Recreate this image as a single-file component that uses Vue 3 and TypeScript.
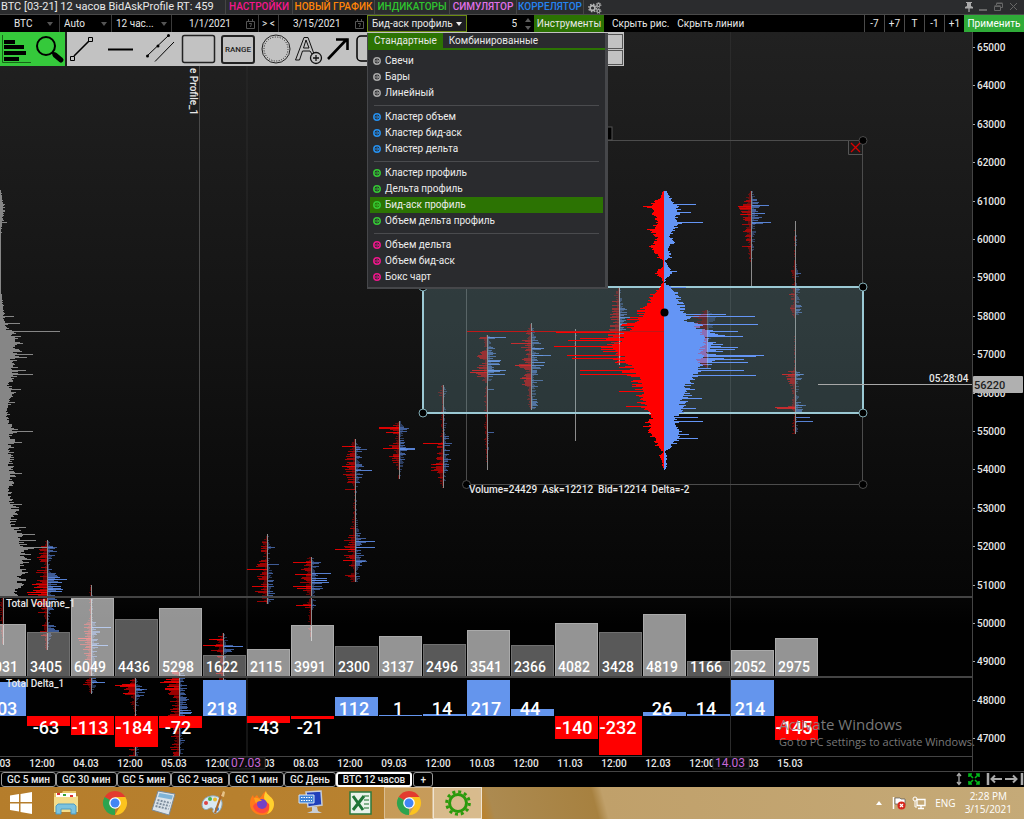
<script setup lang="ts">
import { ref } from 'vue'

type Knot = [number, number, number]
type Spike = [number, number]
interface Profile { x: number; knots: Knot[]; spikes?: Spike[] }
interface Shape { d: string; side: string; tone: number }

function makeRandom(seed: number) {
  let s = seed
  return () => {
    s = (s * 1664525 + 1013904223) % 4294967296
    return s / 4294967296
  }
}

function envelope(knots: Knot[], y: number, column: 1 | 2): number {
  for (let i = 0; i < knots.length - 1; i++) {
    const a = knots[i]
    const b = knots[i + 1]
    if (y >= a[0] && y <= b[0]) {
      return a[column] + ((b[column] - a[column]) * (y - a[0])) / (b[0] - a[0])
    }
  }
  return 0
}

function shapes(p: Profile, floor: number, solid: boolean): Shape[] {
  const rnd = makeRandom(Math.round(p.x * 97 + 11))
  const paths: Record<string, string> = {}
  const add = (y: number, w: number) => {
    const side = w < 0 ? 'bid' : 'ask'
    const size = Math.abs(w)
    const tone = solid ? 3 : size > 12 ? 3 : size > 5 ? 2 : 1
    const key = side + tone
    paths[key] = (paths[key] || '') + `M${p.x} ${y + 0.5}h${Math.round(w)}`
  }
  const first = p.knots[0][0]
  const last = p.knots[p.knots.length - 1][0]
  for (let y = first; y < last; y++) {
    const left = envelope(p.knots, y, 1) * (floor + (1 - floor) * Math.pow(rnd(), 1.6) * 1.2)
    const right = envelope(p.knots, y, 2) * (floor + (1 - floor) * Math.pow(rnd(), 1.6) * 1.2)
    if (left >= 0.5) add(y, -left)
    if (right >= 0.5) add(y, right)
  }
  for (const [y, w] of p.spikes || []) add(y, w)
  return Object.keys(paths).map((key) => ({ d: paths[key], side: key.slice(0, 3), tone: Number(key.slice(3)) }))
}

const profiles: Profile[] = [
  { x: 3, knots: [[597, 2, 1], [610, 4, 1], [645, 1, 1]] },
  { x: 47, knots: [[540, 1, 1], [547, 7, 10], [557, 9, 7], [566, 5, 3], [575, 14, 12], [585, 18, 14], [596, 18, 12], [606, 13, 8], [620, 2, 2], [630, 8, 12], [640, 3, 3], [650, 1, 1]], spikes: [[547, 10], [579, 20], [592, -20], [589, 16]] },
  { x: 91, knots: [[585, 1, 1], [600, 2, 2], [618, 2, 2], [628, 9, 9], [640, 12, 9], [650, 9, 7], [665, 3, 3], [682, 8, 6], [694, 1, 1]], spikes: [[627, 20], [645, 17], [682, 14]] },
  { x: 135, knots: [[676, 1, 1], [686, 15, 6], [692, 12, 12], [700, 5, 6], [712, 1, 2], [730, 3, 3], [750, 5, 4], [756, 5, 3]], spikes: [[685, -20], [689, 12]] },
  { x: 179, knots: [[672, 6, 5], [682, 14, 9], [694, 12, 9], [706, 6, 12], [713, 12, 12], [728, 8, 8], [738, 9, 6], [756, 6, 3]], spikes: [[682, -19], [710, 12]] },
  { x: 223, knots: [[633, 1, 2], [640, 12, 6], [648, 12, 12], [656, 7, 4], [664, 2, 2], [676, 8, 4], [680, 2, 2]], spikes: [[645, -20], [646, 20], [639, -14], [677, -18]] },
  { x: 267, knots: [[534, 0, 1], [542, 5, 6], [548, 8, 6], [555, 3, 2], [565, 10, 4], [575, 12, 6], [588, 14, 7], [596, 6, 9], [604, 1, 2]], spikes: [[564, 12], [569, -20], [586, -15], [601, -10], [547, 8]] },
  { x: 311, knots: [[557, 2, 2], [562, 12, 9], [568, 10, 7], [574, 15, 13], [582, 10, 16], [590, 14, 8], [597, 2, 3], [604, 12, 9], [609, 2, 2], [625, 3, 1], [641, 0, 0]], spikes: [[562, -18], [573, 20], [580, 16], [586, -18], [588, 12], [605, -15]] },
  { x: 355, knots: [[439, 1, 1], [447, 6, 6], [460, 9, 8], [470, 12, 9], [482, 8, 5], [490, 1, 2], [515, 2, 2], [530, 5, 4], [540, 12, 11], [550, 8, 6], [561, 13, 10], [570, 2, 2], [575, 9, 6], [582, 9, 5]], spikes: [[446, -13], [449, 12], [466, -13], [470, 17], [489, -10], [541, 20], [549, -20], [547, 20], [561, 12]] },
  { x: 399, knots: [[421, 1, 2], [428, 9, 10], [437, 3, 4], [446, 11, 9], [456, 9, 7], [464, 4, 4], [472, 1, 2], [479, 1, 1]], spikes: [[427, -20], [428, -20], [432, -13], [448, -16], [448, 16], [449, 16], [456, -10]] },
  { x: 443, knots: [[385, 1, 1], [393, 5, 5], [402, 1, 2], [418, 3, 4], [430, 1, 2], [442, 5, 8], [453, 8, 8], [466, 11, 6], [476, 7, 3], [488, 1, 2]], spikes: [[443, -20], [464, -12], [470, -12]] },
  { x: 487, knots: [[335, 2, 3], [338, 9, 8], [347, 2, 7], [355, 9, 12], [364, 6, 14], [372, 15, 14], [378, 8, 6], [383, 1, 1], [400, 3, 1], [420, 3, 1], [445, 2, 2], [470, 0, 0]], spikes: [[337, 19], [361, 13], [370, 19], [372, -17], [374, 18], [389, 7], [432, 7]] },
  { x: 531, knots: [[323, 1, 1], [338, 7, 6], [344, 13, 10], [355, 8, 12], [365, 13, 13], [372, 5, 6], [380, 11, 9], [393, 4, 4], [405, 3, 7], [410, 1, 1]], spikes: [[343, -20], [348, 13], [355, 20], [365, -16], [365, 13], [380, 12], [378, -11]] },
  { x: 575, knots: [[329, 0, 1], [345, 1, 2], [350, 0, 0], [441, 0, 0]] },
  { x: 619, knots: [[288, 2, 2], [300, 6, 4], [316, 8, 9], [328, 12, 8], [340, 9, 5], [365, 2, 2]], spikes: [[317, 17], [324, 17]] },
  { x: 751, knots: [[191, 1, 2], [203, 10, 9], [208, 12, 8], [214, 10, 12], [222, 8, 5], [236, 6, 4], [250, 4, 3], [262, 1, 1], [266, 0, 0], [286, 0, 0]], spikes: [[205, 18], [207, -12], [208, -11], [213, 14], [214, -10], [222, 20], [223, 12], [246, -9]] },
  { x: 795, knots: [[221, 0, 0], [240, 1, 2], [262, 1, 1], [273, 6, 6], [280, 1, 2], [294, 6, 6], [302, 3, 5], [311, 7, 7], [318, 0, 1], [350, 1, 1], [368, 1, 1], [374, 12, 9], [382, 7, 4], [395, 2, 3], [408, 8, 9], [415, 2, 2], [434, 3, 3]], spikes: [[407, -20], [408, -18], [417, 15], [421, 18], [405, 11], [374, 9]] }
]

const overlapped: Profile = { x: 707, knots: [[310, 2, 2], [314, 14, 9], [324, 13, 6], [340, 3, 3], [360, 12, 3], [368, 1, 1]] }

const mainProfile: Profile = {
  x: 664,
  knots: [[191, 2, 4], [198, 5, 8], [204, 17, 13], [210, 15, 20], [215, 12, 15], [222, 8, 18], [229, 15, 13], [236, 9, 8], [242, 12, 11], [248, 13, 5], [257, 7, 9], [260, 1, 1], [266, 1, 6], [272, 11, 10], [278, 3, 3], [282, 1, 0], [286, 5, 7], [294, 13, 15], [302, 20, 18], [313, 27, 24], [320, 36, 30], [328, 46, 42], [335, 58, 60], [346, 66, 72], [353, 62, 62], [362, 48, 54], [370, 44, 50], [376, 36, 40], [384, 32, 31], [392, 30, 28], [400, 27, 24], [410, 22, 20], [418, 16, 14], [426, 21, 16], [434, 15, 22], [440, 10, 14], [446, 8, 9], [451, 1, 1], [455, 5, 4], [460, 3, 3], [467, 1, 3], [470, 0, 0]],
  spikes: [[204, 32], [206, -21], [212, 27], [222, 39], [229, -17], [246, -15], [271, 13], [287, 22], [316, 91], [314, 62], [324, 94], [331, 74], [336, 79], [332, -108], [338, -84], [340, -96], [346, -110], [347, 74], [355, -97], [358, -92], [355, 100], [356, 92], [359, 80], [362, 84], [370, -84], [370, 80], [374, -84], [375, 92], [391, -45], [398, 38], [406, -38], [408, 32], [417, 34], [421, 39], [426, -21], [434, 25], [438, 34], [445, -9], [443, 13]]
}

const leftKnots: Knot[] = [[190, 0, 1], [205, 0, 5], [212, 0, 5], [222, 0, 3], [235, 0, 1], [286, 0, 1], [300, 0, 3], [315, 0, 5], [327, 0, 8], [333, 0, 16], [340, 0, 24], [348, 0, 22], [358, 0, 17], [370, 0, 19], [385, 0, 12], [395, 0, 18], [405, 0, 12], [418, 0, 9], [428, 0, 17], [440, 0, 14], [460, 0, 13], [475, 0, 15], [492, 0, 12], [510, 0, 19], [525, 0, 16], [538, 0, 29], [550, 0, 34], [562, 0, 30], [575, 0, 28], [585, 0, 24], [597, 0, 24]]
const leftProfile = shapes({ x: 0, knots: leftKnots, spikes: [[222, 7], [316, 14], [323, 20], [331, 60], [354, 33], [357, 27], [370, 26], [374, 33], [389, 21], [431, 33], [442, 22], [473, 22], [504, 22], [527, 26], [534, 35], [540, 36], [547, 47]] }, 0.6, true)

const smallShapes = profiles.map((p) => ({
  x: p.x,
  top: p.knots[0][0],
  bottom: p.knots[p.knots.length - 1][0],
  shapes: shapes(p, 0.22, false)
}))
const overlappedShapes = shapes(overlapped, 0.3, true)
const mainShapes = shapes(mainProfile, 0.66, true)

interface Slot { volume: number; delta: number; light: boolean; time: string }
const slots: Slot[] = [
  { volume: 4031, delta: 203, light: true, time: '03.03' },
  { volume: 3405, delta: -63, light: false, time: '12:00' },
  { volume: 6049, delta: -113, light: true, time: '04.03' },
  { volume: 4436, delta: -184, light: false, time: '12:00' },
  { volume: 5298, delta: -72, light: true, time: '05.03' },
  { volume: 1622, delta: 218, light: false, time: '12:00' },
  { volume: 2115, delta: -43, light: true, time: '07.03' },
  { volume: 3991, delta: -21, light: true, time: '08.03' },
  { volume: 2300, delta: 112, light: false, time: '12:00' },
  { volume: 3137, delta: 1, light: true, time: '09.03' },
  { volume: 2496, delta: 14, light: false, time: '12:00' },
  { volume: 3541, delta: 217, light: true, time: '10.03' },
  { volume: 2366, delta: 44, light: false, time: '12:00' },
  { volume: 4082, delta: -140, light: true, time: '11.03' },
  { volume: 3428, delta: -232, light: false, time: '12:00' },
  { volume: 4819, delta: 26, light: true, time: '12.03' },
  { volume: 1166, delta: 14, light: false, time: '12:00' },
  { volume: 2052, delta: 214, light: true, time: '14.03' },
  { volume: 2975, delta: -145, light: true, time: '15.03' }
]
const bars = slots.map((s, i) => {
  const x = 44 * i - 17
  const vh = Math.round(s.volume * 0.0129)
  const dh = Math.max(1, Math.round(Math.abs(s.delta) * 0.166))
  return { ...s, x, vh, dh }
})

const prices = Array.from({ length: 19 }, (_, i) => ({ value: 65000 - i * 1000, y: Math.round(47 + i * 38.4) }))

const mainNav = [
  { label: 'НАСТРОЙКИ', tone: 'pink' },
  { label: 'НОВЫЙ ГРАФИК', tone: 'orange' },
  { label: 'ИНДИКАТОРЫ', tone: 'green' },
  { label: 'СИМУЛЯТОР', tone: 'violet' },
  { label: 'КОРРЕЛЯТОР', tone: 'blue' }
]

const groups = [
  { tone: 'grey', items: ['Свечи', 'Бары', 'Линейный'] },
  { tone: 'blue', items: ['Кластер объем', 'Кластер бид-аск', 'Кластер дельта'] },
  { tone: 'green', items: ['Кластер профиль', 'Дельта профиль', 'Бид-аск профиль', 'Объем дельта профиль'] },
  { tone: 'pink', items: ['Объем дельта', 'Объем бид-аск', 'Бокс чарт'] }
]
const chosen = ref('Бид-аск профиль')
const menuTabs = ['Стандартные', 'Комбинированные']
const menuTab = ref('Стандартные')

const steps = ['-7', '+7', 'T', '-1', '+1']
const charts = ['GC 5 мин', 'GC 30 мин', 'GC 5 мин', 'GC 2 часа', 'GC 1 мин', 'GC День', 'BTC 12 часов']
const activeChart = ref(6)
const dateFrom = ref('1/1/2021')
const dateTo = ref('3/15/2021')
const count = ref('5')
</script>

<template>
  <div class="screen">
    <header class="titlebar">
      <h1 class="title">BTC [03-21] 12 часов BidAskProfile RT: 459</h1>
      <nav class="main-nav">
        <a v-for="n in mainNav" :key="n.label" href="#" :class="['nav-link', n.tone]">{{ n.label }}</a>
        <button class="gear-btn" aria-label="Параметры">
          <svg width="14" height="12" viewBox="0 0 14 12" fill="none" stroke="#b4b4b4">
            <circle cx="4.500" cy="6" r="2.400" stroke-width="1.600" />
            <circle cx="4.500" cy="6" r="3.800" stroke-width="1.400" stroke-dasharray="1.5 1.5" />
            <circle cx="10.500" cy="3" r="1.500" stroke-width="1.200" /><circle cx="10.500" cy="3" r="2.400" stroke-dasharray="1 1" />
            <circle cx="10.500" cy="9" r="1.500" stroke-width="1.200" /><circle cx="10.500" cy="9" r="2.400" stroke-dasharray="1 1" />
          </svg>
        </button>
      </nav>
      <div class="window-btns">
        <button aria-label="Закрепить"><svg width="8" height="10" viewBox="0 0 8 10" fill="#aaa"><path d="M1 0h6v1H6v3l2 1v1.500H4.600V10H3.400V6.500H0V5l2-1V1H1z" /></svg></button>
        <button aria-label="Свернуть"><svg width="9" height="10" viewBox="0 0 9 10" fill="#666"><path d="M0 7h8v2H0z" /></svg></button>
        <button aria-label="Окно"><svg width="9" height="10" viewBox="0 0 9 10" fill="none" stroke="#666"><path d="M2.500 3V1.500h6v4H7M.5 4.500h6v4h-6zM.5 3.800h6M2.500 1h6" /></svg></button>
        <button aria-label="Закрыть"><svg width="9" height="10" viewBox="0 0 9 10" stroke="#666"><path d="M1 1l7 7M8 1L1 8" /></svg></button>
      </div>
    </header>

    <div class="controls">
      <label class="field f-btc"><select aria-label="Инструмент"><option>BTC</option></select><i class="arrow"></i></label>
      <label class="field f-auto"><select aria-label="Масштаб"><option>Auto</option></select><i class="arrow"></i></label>
      <label class="field f-period"><select aria-label="Период"><option>12 час...</option></select><i class="arrow"></i></label>
      <label class="field f-from"><input v-model="dateFrom" aria-label="Начало" />
        <svg class="cal" width="9" height="10" viewBox="0 0 9 10" fill="none" stroke="#555"><path d="M.5 2.500h8v7h-8zM2.500 0v2M6.500 0v2M3 4.500h2.500L4.500 8" /></svg>
      </label>
      <button class="shift">&gt; &lt;</button>
      <label class="field f-to"><input v-model="dateTo" aria-label="Конец" />
        <svg class="cal" width="9" height="10" viewBox="0 0 9 10" fill="none" stroke="#555"><path d="M.5 2.500h8v7h-8zM2.500 0v2M6.500 0v2M3 4.500h2.500L4.500 8" /></svg>
      </label>
      <div class="type-box">
        <button class="type-btn" aria-haspopup="true" aria-expanded="true">{{ chosen }}<i class="arrow white"></i></button>
        <div class="menu">
          <div class="menu-tabs">
            <button v-for="t in menuTabs" :key="t" :class="['menu-tab', { on: t === menuTab }]" @click="menuTab = t">{{ t }}</button>
          </div>
          <ul v-for="g in groups" :key="g.tone" class="group">
            <li v-for="item in g.items" :key="item">
              <button :class="['item', g.tone, { on: item === chosen }]" @click="chosen = item">
                <svg width="8" height="8" viewBox="0 0 8 8" fill="none" stroke="currentColor"><circle cx="4" cy="4" r="3.200" stroke-width="1.500" /><path d="M1.500 4H5.500M4 2.300L5.700 4 4 5.700" /></svg>
                <span>{{ item }}</span>
              </button>
            </li>
          </ul>
        </div>
      </div>
      <label class="field f-count"><input v-model="count" aria-label="Количество" />
        <svg class="cal" width="6" height="12" viewBox="0 0 6 12" fill="#5c5c5c"><path d="M0 4l3-4 3 4zM0 8l3 4 3-4z" /></svg>
      </label>
      <button class="tools-btn">Инструменты</button>
      <button class="flat">Скрыть рис.</button>
      <button class="flat">Скрыть линии</button>
      <div class="steps">
        <button v-for="s in steps" :key="s">{{ s }}</button>
      </div>
      <button class="apply">Применить</button>
    </div>

    <main class="chart">
      <svg class="plot" role="img" aria-label="График BTC">
        <defs>
          <linearGradient id="plotBg" x1="0" y1="0" x2="0" y2="1">
            <stop offset="0" stop-color="#212121" /><stop offset="0.45" stop-color="#121212" /><stop offset="0.76" stop-color="#060606" /><stop offset="0.8" stop-color="#010101" />
          </linearGradient>
        </defs>
        <rect width="100%" height="740" fill="url(#plotBg)" />
        <g transform="translate(0 -32)">
          <path d="M247 66V756M730.500 32V756" stroke="#2b2b2b" stroke-width="1" />
          <path d="M199.500 66V597" stroke="#4a4a4a" />
          <g v-for="p in smallShapes" :key="p.x">
            <path v-for="(s, i) in p.shapes" :key="i" :d="s.d" :class="[s.side, 't' + s.tone]" />
            <path :d="`M${p.x + 0.5} ${p.top}V${p.bottom}`" stroke="#8c8c8c" />
          </g>
          <path v-for="(s, i) in leftProfile" :key="'l' + i" :d="s.d" class="hist" />

          <g v-for="b in bars" :key="'v' + b.x">
            <rect :x="b.x + 0.5" :y="676.5 - b.vh" width="42" :height="b.vh" :class="b.light ? 'vol-light' : 'vol-dark'" />
            <rect :x="b.x" :y="b.delta > 0 ? 716 - b.dh : 716" width="43" :height="b.dh" :class="b.delta > 0 ? 'pos' : 'neg'" />
            <text :x="b.x + 19" y="672" class="vol-text">{{ b.volume }}</text>
            <text :x="b.x + 19" :y="b.delta > 0 ? 715 : 734" class="delta-text">{{ b.delta }}</text>
            <text :x="b.x + 15" y="767" class="axis-text mid">{{ b.time }}</text>
          </g>
          <rect y="596" width="100%" height="2" fill="#444" />
          <rect y="676" width="100%" height="2" fill="#444" />
          <rect y="756" width="100%" height="1" fill="#444" />
          <rect y="771" width="100%" height="1" fill="#444" />
          <text x="6" y="607" class="label">Total Volume_1</text>
          <text x="6" y="687" class="label">Total Delta_1</text>
          <text x="0" y="0" transform="translate(190 68) rotate(90)" class="label">e Profile_1</text>
          <g>
            <rect x="229" y="757" width="36" height="12" fill="#0b0b0b" stroke="#2a2a2a" /><text x="246" y="767" class="tag">07.03</text>
            <rect x="713" y="757" width="36" height="12" fill="#0b0b0b" stroke="#2a2a2a" /><text x="730" y="767" class="tag">14.03</text>
          </g>

          <path d="M466.500 140.500H862.500V484.500H466.500z" fill="none" stroke="#4c4c4c" />
          <rect x="606" y="127" width="6" height="13" fill="#000" stroke="#555" />
          <rect x="423" y="287" width="440" height="126" fill="#7fb0b8" fill-opacity="0.25" stroke="#9bc9d4" stroke-width="2" />
          <path v-for="(s, i) in mainShapes" :key="'m' + i" :d="s.d" :class="[s.side, 'core']" />
          <path d="M467 331.500H664" stroke="#c01818" />
          <g opacity="0.300">
            <path v-for="(s, i) in overlappedShapes" :key="'o' + i" :d="s.d" :class="[s.side, 't3']" />
            <path d="M707.500 310V368M619.500 288V365" stroke="#ddd" />
          </g>
          <path d="M818 384.500H972" stroke="#a8a8a8" />
          <text x="929" y="382" class="label">05:28:04</text>
          <circle cx="664.500" cy="312.500" r="4" />
          <g stroke="#4c4c4c">
            <circle cx="466.500" cy="484.500" r="4" /><circle cx="863" cy="484.500" r="4" /><circle cx="863" cy="140.500" r="4" />
          </g>
          <g stroke="#7fa9b2">
            <circle cx="423" cy="287" r="4" /><circle cx="863" cy="287" r="4" /><circle cx="423" cy="413" r="4" /><circle cx="863" cy="413" r="4" />
          </g>
          <path d="M848.500 141V154.500H862.500" fill="none" stroke="#555" />
          <path d="M851 143l9 9M860 143l-9 9" stroke="#d80000" stroke-width="1.300" />
          <text x="469" y="493" class="label info">Volume=24429&#160; Ask=12212&#160; Bid=12214&#160; Delta=-2</text>
        </g>
      </svg>
      <svg class="axis" role="img" aria-label="Шкала цен">
        <path d="M.5 0V740" stroke="#444" />
        <rect y="739" width="52" height="1" fill="#444" />
        <g transform="translate(0 -32)">
          <g v-for="p in prices" :key="p.value">
            <rect x="1" :y="p.y" width="2" height="1" fill="#aaa" />
            <text x="5" :y="p.y + 4" class="axis-text">{{ p.value }}</text>
          </g>
          <rect x="1" y="376" width="50" height="17" rx="1" fill="#b0b0b0" />
          <text x="2" y="389" class="price-now">56220</text>
        </g>
      </svg>

      <div class="toolbar">
        <div class="tb-green">
          <button aria-label="Профиль"><svg width="32" height="34" viewBox="0 0 32 34"><path d="M2.500 3V30.500H31" fill="none" stroke="#176617" /><path d="M4 8h11v4H4zM4 13h20v4H4zM4 19h22v4H4zM4 25h15v4H4z" fill="#000" /></svg></button>
          <button aria-label="Лупа"><svg width="33" height="34" viewBox="0 0 33 34" fill="none" stroke="#000"><circle cx="14" cy="14" r="9" stroke-width="2" /><path d="M20 20l3 3" stroke-width="3" /><path d="M23 23l6 5" stroke-width="5" stroke-linecap="round" /></svg></button>
        </div>
        <div class="tb-grey">
          <button aria-label="Отрезок"><svg width="30" height="34" viewBox="0 0 30 34" fill="none" stroke="#000"><path d="M7 24L22 9" stroke-width="1.600" /><path d="M3.500 24.500h4v4h-4zM21.500 5.500h4v4h-4z" /></svg></button>
          <button aria-label="Горизонталь"><svg width="46" height="34" viewBox="0 0 46 34" stroke="#000" stroke-width="2"><path d="M11 17.500H36" /></svg></button>
          <button aria-label="Канал"><svg width="37" height="34" viewBox="0 0 37 34" fill="none" stroke="#000"><path d="M4 24L26 3M12 29.500L31 10" /><g fill="#000" stroke="none"><circle cx="4.500" cy="24" r="1.500" /><circle cx="15" cy="14" r="1.500" /><circle cx="25.500" cy="3.500" r="1.500" /></g></svg></button>
          <button aria-label="Прямоугольник"><svg width="38" height="34" viewBox="0 0 38 34" fill="none" stroke="#222" stroke-width="1.500"><rect x="2.500" y="3.500" width="32" height="27" rx="2" /></svg></button>
          <button class="range">RANGE</button>
          <button aria-label="Окружность"><svg width="36" height="34" viewBox="0 0 36 34" fill="none" stroke="#222"><circle cx="18" cy="17" r="14" /><circle cx="18" cy="17" r="12" stroke-dasharray="1 1.500" /></svg></button>
          <button aria-label="Надпись"><svg width="30" height="34" viewBox="0 0 30 34" fill="none" stroke="#111"><path d="M1.500 28L10 5.500h4L20 22h-2l-2-3H8.500L5.500 28zM9.500 16h5.500L12 8z" /><circle cx="22" cy="26" r="5.500" fill="#c2c2c2" stroke-width="1.300" /><path d="M22 23v6M19 26h6" stroke-width="1.300" /></svg></button>
          <button aria-label="Стрелка"><svg width="30" height="34" viewBox="0 0 30 34" fill="none" stroke="#000" stroke-width="2.600"><path d="M4 27L23 7M12 7.500H23.500V18" /></svg></button>
          <button aria-label="Метка"><svg width="30" height="34" viewBox="0 0 30 34" fill="none" stroke="#000" stroke-width="1.500"><rect x="3" y="4" width="30" height="25" rx="4" /></svg></button>
          <span class="tb-mini"><i></i><i></i></span>
        </div>
      </div>
      <p class="watermark"><span>Activate Windows</span><small>Go to PC settings to activate Windows.</small></p>
    </main>

    <div class="chart-tabs">
      <button v-for="(c, i) in charts" :key="i" :class="['chart-tab', { on: i === activeChart }]" @click="activeChart = i">{{ c }}</button>
      <button class="chart-tab add" aria-label="Добавить">+</button>
      <div class="fit">
        <svg width="70" height="14" viewBox="0 0 70 14" fill="none" stroke="#aaa">
          <path d="M5 2v10M3 4l2-2.500L7 4M3 10l2 2.500L7 10" stroke-width="1.300" />
          <g stroke="#00b818" stroke-width="2"><path d="M15 2l4 4M25 2l-4 4M15 12l4-4M25 12l-4-4M15 5V2h3M25 5V2h-3M15 9v3h3M25 9v3h-3" stroke-width="1.600" /></g>
          <path d="M34 1v12M68 1v12" stroke-width="2.500" /><path d="M37 7h11M41 3.500L37.500 7l3.500 3.500M51 7h12M59 3.500L62.500 7 59 10.500" stroke-width="2" />
        </svg>
      </div>
    </div>

    <footer class="taskbar">
      <button class="task start" aria-label="Пуск"><svg width="24" height="24" viewBox="0 0 24 24" fill="#fff"><path d="M1 4.500l9-1.400V11H1zM11.500 2.900L23 1v10H11.500zM1 12.500h9v8L1 19zM11.500 12.500H23V23l-11.500-1.900z" /></svg></button>
      <button class="task" aria-label="Проводник"><svg width="26" height="26" viewBox="0 0 26 26"><path d="M1 3h8l1-2h13v5h2v16H1z" fill="#e8c766" /><path d="M3 3h20v4H3z" fill="#fff" /><path d="M4 3h3v2H4zM17 5h3v2h-3z" fill="#d33" /><path d="M10 4h3v2h-3z" fill="#35a535" /><path d="M1 7h24v15H1z" fill="#f3dd8c" /><path d="M3 24v-8l2-2h16l2 2v8h-5v-5H8v5z" fill="#7cc3df" stroke="#4c9cc4" /></svg></button>
      <button class="task" aria-label="Chrome"><svg width="26" height="26" viewBox="0 0 26 26"><path d="M13 13L2.600 7A12 12 0 0 1 23.400 7z" fill="#e33b2e" /><path d="M13 13v12A12 12 0 0 1 2.600 7z" fill="#2da44e" /><path d="M13 7h10.400A12 12 0 0 1 13 25l5.200-9z" fill="#fcc31e" /><circle cx="13" cy="13" r="5.800" fill="#fff" /><circle cx="13" cy="13" r="4.500" fill="#4285f4" /></svg></button>
      <button class="task" aria-label="Калькулятор"><svg width="26" height="26" viewBox="0 0 26 26"><path d="M7 1l17 3-6 21L1 20z" fill="#dbe3ea" stroke="#7a8a98" /><path d="M8.500 3l13.500 2.500-1.300 4L7 7z" fill="#7fb4d8" /><path d="M6.500 10l13 3M5.500 13l13 3M4.500 16l13 3" stroke="#7c8c9c" stroke-width="2" stroke-dasharray="2 1.200" /></svg></button>
      <button class="task" aria-label="Paint"><svg width="26" height="26" viewBox="0 0 26 26"><path d="M11 6c7-1 12 3 11 9s-5 9-8 8c-3-2 1-4-2-5s-4 3-8 1C0 16 2 7 11 6z" fill="#d8e8f2" stroke="#89a8bd" /><circle cx="6" cy="13" r="2" fill="#d44" /><circle cx="10" cy="9" r="2" fill="#47b04b" /><circle cx="15" cy="9.500" r="2" fill="#e9b92f" /><circle cx="17" cy="19" r="2" fill="#3b7ed0" /><path d="M22 3l-7 20" stroke="#b06a28" stroke-width="2.200" /><path d="M21 6l2-5 2 1-1 5z" fill="#e6c288" /></svg></button>
      <button class="task" aria-label="Firefox"><svg width="26" height="26" viewBox="0 0 26 26"><path d="M13 25C6 25 1 20 1 14c0-4 1-7 3-9l1 3 3-3 2 3c3 0 3-5 7-7 0 4 8 6 8 13s-5 11-12 11z" fill="#ff7a1a" /><path d="M17 1c0 4 8 6 8 13 0 5-3 9-7 10 4-5 2-9-1-12-2-2-3-6 0-11z" fill="#ffd12e" /><path d="M4 16c1 5 6 8 11 7 4-1 6-5 5-9l-5-4H9z" fill="#ff4a3d" /><circle cx="13" cy="14" r="5" fill="#7442c8" /><path d="M5 8c3-1 6 1 8 3-3 0-5 0-6 3z" fill="#ffa21a" /></svg></button>
      <button class="task" aria-label="Клавиатура"><svg width="26" height="26" viewBox="0 0 26 26"><path d="M8 2l15-1 1 14-14 2z" fill="#1f3fbb" stroke="#c7ced8" stroke-width="1.500" /><path d="M14 17h5l1 4 4 2H9l5-2z" fill="#c9ced6" /><path d="M1 5h15v8H1z" fill="#3f83d6" stroke="#d6e6fa" /><path d="M3 7.500h11M3 10.500h11" stroke="#fff" stroke-dasharray="1.500 1" /></svg></button>
      <button class="task" aria-label="Excel"><svg width="26" height="26" viewBox="0 0 26 26"><path d="M3 2h21v22H3z" fill="#e9f3ea" stroke="#2c7a3d" stroke-width="1.500" /><path d="M17 6h5M17 10h5M17 14h5M17 18h5" stroke="#5f9c6b" stroke-width="1.500" /><path d="M6 6l10 14M17 6L6 20" stroke="#1f7537" stroke-width="3" /></svg></button>
      <button class="task open" aria-label="Chrome, открыт"><svg width="26" height="26" viewBox="0 0 26 26"><path d="M13 13L2.600 7A12 12 0 0 1 23.400 7z" fill="#e33b2e" /><path d="M13 13v12A12 12 0 0 1 2.600 7z" fill="#2da44e" /><path d="M13 7h10.400A12 12 0 0 1 13 25l5.200-9z" fill="#fcc31e" /><circle cx="13" cy="13" r="5.800" fill="#fff" /><circle cx="13" cy="13" r="4.500" fill="#4285f4" /></svg></button>
      <button class="task active" aria-label="Терминал"><svg width="28" height="28" viewBox="0 0 28 28" fill="none" stroke="#2b9a0c"><circle cx="14" cy="14" r="8.500" stroke-width="3" /><circle cx="14" cy="14" r="11.300" stroke-width="3" stroke-dasharray="3 2.900" /></svg></button>
      <div class="tray">
        <svg class="more" width="8" height="6" viewBox="0 0 8 6"><path d="M1 5l3-4 3 4z" fill="#fff" /></svg>
        <svg width="14" height="14" viewBox="0 0 14 14"><path d="M1.500 1v12" stroke="#fff" stroke-width="1.500" /><path d="M3 2h5l1 1h4v6H8L7 8H3z" fill="#fff" stroke="#555" stroke-width=".7" /><circle cx="9.500" cy="9.500" r="4" fill="#d6281e" /><path d="M8 8l3 3M11 8l-3 3" stroke="#fff" stroke-width="1.200" /></svg>
        <svg width="14" height="14" viewBox="0 0 14 14" fill="none" stroke="#fff"><path d="M5 3.500h8v6H5zM6 12.500h6M9 10v2" stroke-width="1.300" /><circle cx="3" cy="3" r="2" /><path d="M3 5v6h2" /></svg>
        <span class="lang">ENG</span>
        <time class="clock"><span>2:28 PM</span><span>3/15/2021</span></time>
      </div>
    </footer>
  </div>
</template>

<style>
html, body { margin: 0; background: #000; }
</style>

<style scoped>
.screen { display: flex; flex-direction: column; min-height: 100vh; background: #000; color: #e8e8e8; font-family: Roboto, "Liberation Sans", sans-serif; font-size: 10px; line-height: 12px; overflow: hidden; }
button, input, select { font: inherit; color: inherit; background: none; border: 0; padding: 0; margin: 0; border-radius: 0; }
button { white-space: nowrap; cursor: pointer; }
svg { display: block; }

.titlebar { display: flex; height: 14px; background: #2b2c2e; border-bottom: 1px solid #4a4a4a; }
.title { margin: 0; width: 225px; padding-left: 1px; box-sizing: border-box; font-size: 11px; font-weight: 400; line-height: 14px; white-space: nowrap; }
.main-nav { display: flex; }
.nav-link { box-sizing: border-box; width: 67px; text-align: center; border-left: 1px solid #454545; text-decoration: none; font-weight: 500; line-height: 14px; white-space: nowrap; }
.nav-link.pink { color: #f5168c; }
.nav-link.orange { width: 82px; color: #ff8408; }
.nav-link.green { width: 75px; color: #2fc42f; }
.nav-link.violet { color: #e070e8; }
.nav-link.blue { color: #2583f0; }
.gear-btn { padding: 1px 4px 0; border-left: 1px solid #454545; }
.window-btns { display: flex; gap: 6px; margin-left: auto; padding: 2px 6px 0 0; align-items: flex-start; }

.controls { display: flex; height: 17px; background: #000; }
.field { position: relative; display: flex; align-items: center; box-sizing: border-box; border-right: 1px solid #3a3a3a; }
.field select, .field input { width: 100%; min-width: 0; outline: 0; appearance: none; line-height: 14px; }
.f-btc { width: 60px; padding: 0 6px 0 14px; }
.f-auto { width: 52px; padding: 0 4px; }
.f-period { width: 60px; padding: 0 4px; }
.f-from, .f-to { padding-right: 3px; }
.f-from { width: 87px; }
.f-to { width: 88px; border-right: 0; }
.f-from input { padding-left: 17px; }
.f-to input { padding-left: 14px; }
.cal { flex: none; }
.shift { width: 20px; border-right: 1px solid #3a3a3a; }
.arrow { flex: none; border: 3px solid transparent; border-top: 4px solid #555; border-bottom: 0; width: 0; height: 0; }
.arrow.white { border-top-color: #eee; }
.type-box { position: relative; width: 100px; }
.type-btn { display: flex; justify-content: space-between; align-items: center; width: 100%; height: 17px; padding: 0 4px; box-sizing: border-box; border: 1px solid #6c8c10; background: #1c1d1f; }
.f-count { width: 67px; padding: 0 3px 0 6px; border-right: 0; }
.f-count input { text-align: right; padding-right: 8px; }
.tools-btn { width: 70px; background: #2c7303; }
.flat { padding: 0 3px 0 5px; }
.tools-btn + .flat { margin-left: 3px; }
.steps { display: flex; margin-left: auto; }
.steps button { width: 20px; border-left: 1px solid #4a4a4a; }
.apply { width: 60px; background: #2fab38; color: #fff; }

.menu { position: absolute; z-index: 5; top: 18px; left: 0; width: 241px; box-sizing: border-box; background: #2a2b2e; border: solid #46474a; border-width: 0 3px 2px 1px; padding-bottom: 2px; }
.menu-tabs { display: flex; border-bottom: 2px solid #2c7303; margin-bottom: 3px; background: #2a2b2e; }
.menu-tab { padding: 0 6px; height: 15px; }
.menu-tab.on { background: #2c7303; }
.group { list-style: none; margin: 0; padding: 0 2px; }
.group + .group::before { content: ""; display: block; height: 1px; margin: 4px 4px 3px; background: #4a4b4e; }
.item { display: flex; align-items: center; gap: 4px; width: 100%; height: 16px; padding-left: 3px; text-align: left; }
.item span { color: #ececec; }
.item.grey { color: #a8a8a8; }
.item.blue { color: #2590f0; }
.item.green { color: #34c934; }
.item.pink { color: #f0168c; }
.item.on { background: #2c7303; }

.chart { position: relative; display: flex; height: 740px; background: #000; }
.plot { flex: 1; min-width: 0; height: 740px; overflow: hidden; }
.axis { width: 52px; height: 740px; flex: none; background: #000; }
text { font-family: Roboto, "Liberation Sans", sans-serif; fill: #e8e8e8; }
.bid { stroke: #ff0000; }
.ask { stroke: #6495f5; }
.t1 { stroke-opacity: 0.350; }
.t2 { stroke-opacity: 0.600; }
.t3 { stroke-opacity: 0.850; }
.hist { stroke: #868686; }
.vol-light { fill: #fff; fill-opacity: 0.580; stroke: #aaa; }
.vol-dark { fill: #fff; fill-opacity: 0.350; stroke: #707070; }
.pos { fill: #6495ed; }
.neg { fill: #ff0000; }
.vol-text { font-size: 14px; font-weight: 500; text-anchor: middle; fill: #fff; }
.delta-text { font-size: 18px; font-weight: 500; text-anchor: middle; fill: #fff; }
.axis-text, .label { font-size: 10px; font-weight: 500; }
.mid { text-anchor: middle; }
.tag { font-size: 12px; text-anchor: middle; fill: #c667d6; }
.price-now { font-size: 11px; font-weight: 500; fill: #222; }

.toolbar { position: absolute; top: 0; left: 0; display: flex; gap: 2px; height: 34px; }
.tb-green, .tb-grey { display: flex; }
.tb-green { background: #35c93b; }
.tb-grey { background: #c2c2c2; width: 557px; }
.range { width: 34px; height: 29px; margin: 3px 3px 0; border: 2px solid #222; border-radius: 3px; font-size: 8px; font-weight: 500; color: #222; }
.tb-mini { display: flex; flex-direction: column; gap: 1px; margin-left: auto; padding: 2px 1px 0 0; }
.tb-mini i { width: 20px; height: 13px; border: 1px solid #555; background: #c2c2c2; }
.watermark { position: absolute; left: 779px; top: 681px; margin: 0; font-family: "Open Sans", "Noto Sans", sans-serif; color: #8c8c8c; opacity: 0.850; white-space: nowrap; }
.watermark span, .watermark small { display: block; }
.watermark span { font-size: 15px; line-height: 22px; }
.watermark small { font-size: 11px; line-height: 14px; }

.chart-tabs { display: flex; height: 15px; padding-left: 1px; }
.chart-tab { height: 15px; padding: 0 5px; border: 1px solid #9a9a9a; border-radius: 3px; font-weight: 500; line-height: 12px; }
.chart-tab.on { border: 2px solid #fff; line-height: 10px; }
.chart-tab.add { width: 20px; margin-left: 1px; }
.fit { margin-left: auto; }

.taskbar { display: flex; height: 32px; background: linear-gradient(75deg, #b57d2b, #b98331 47%, #ac8a50 48%, #a78140 58%, #c0a06a 59%, #c5aa78); }
.task { display: flex; align-items: center; justify-content: center; width: 49px; box-sizing: border-box; border: 1px solid transparent; }
.start { width: 41px; }
.task.open { background: rgba(255, 255, 255, 0.200); border-color: rgba(255, 255, 255, 0.350); }
.task.active { background: rgba(255, 255, 255, 0.450); border-color: rgba(255, 255, 255, 0.600); }
.tray { display: flex; align-items: center; margin-left: auto; gap: 6px; padding-right: 12px; color: #fff; font-family: "Open Sans", "Noto Sans", sans-serif; }
.more { margin-right: 3px; }
.lang { margin: 0 3px; }
.clock { display: flex; flex-direction: column; text-align: center; line-height: 13px; }
</style>
